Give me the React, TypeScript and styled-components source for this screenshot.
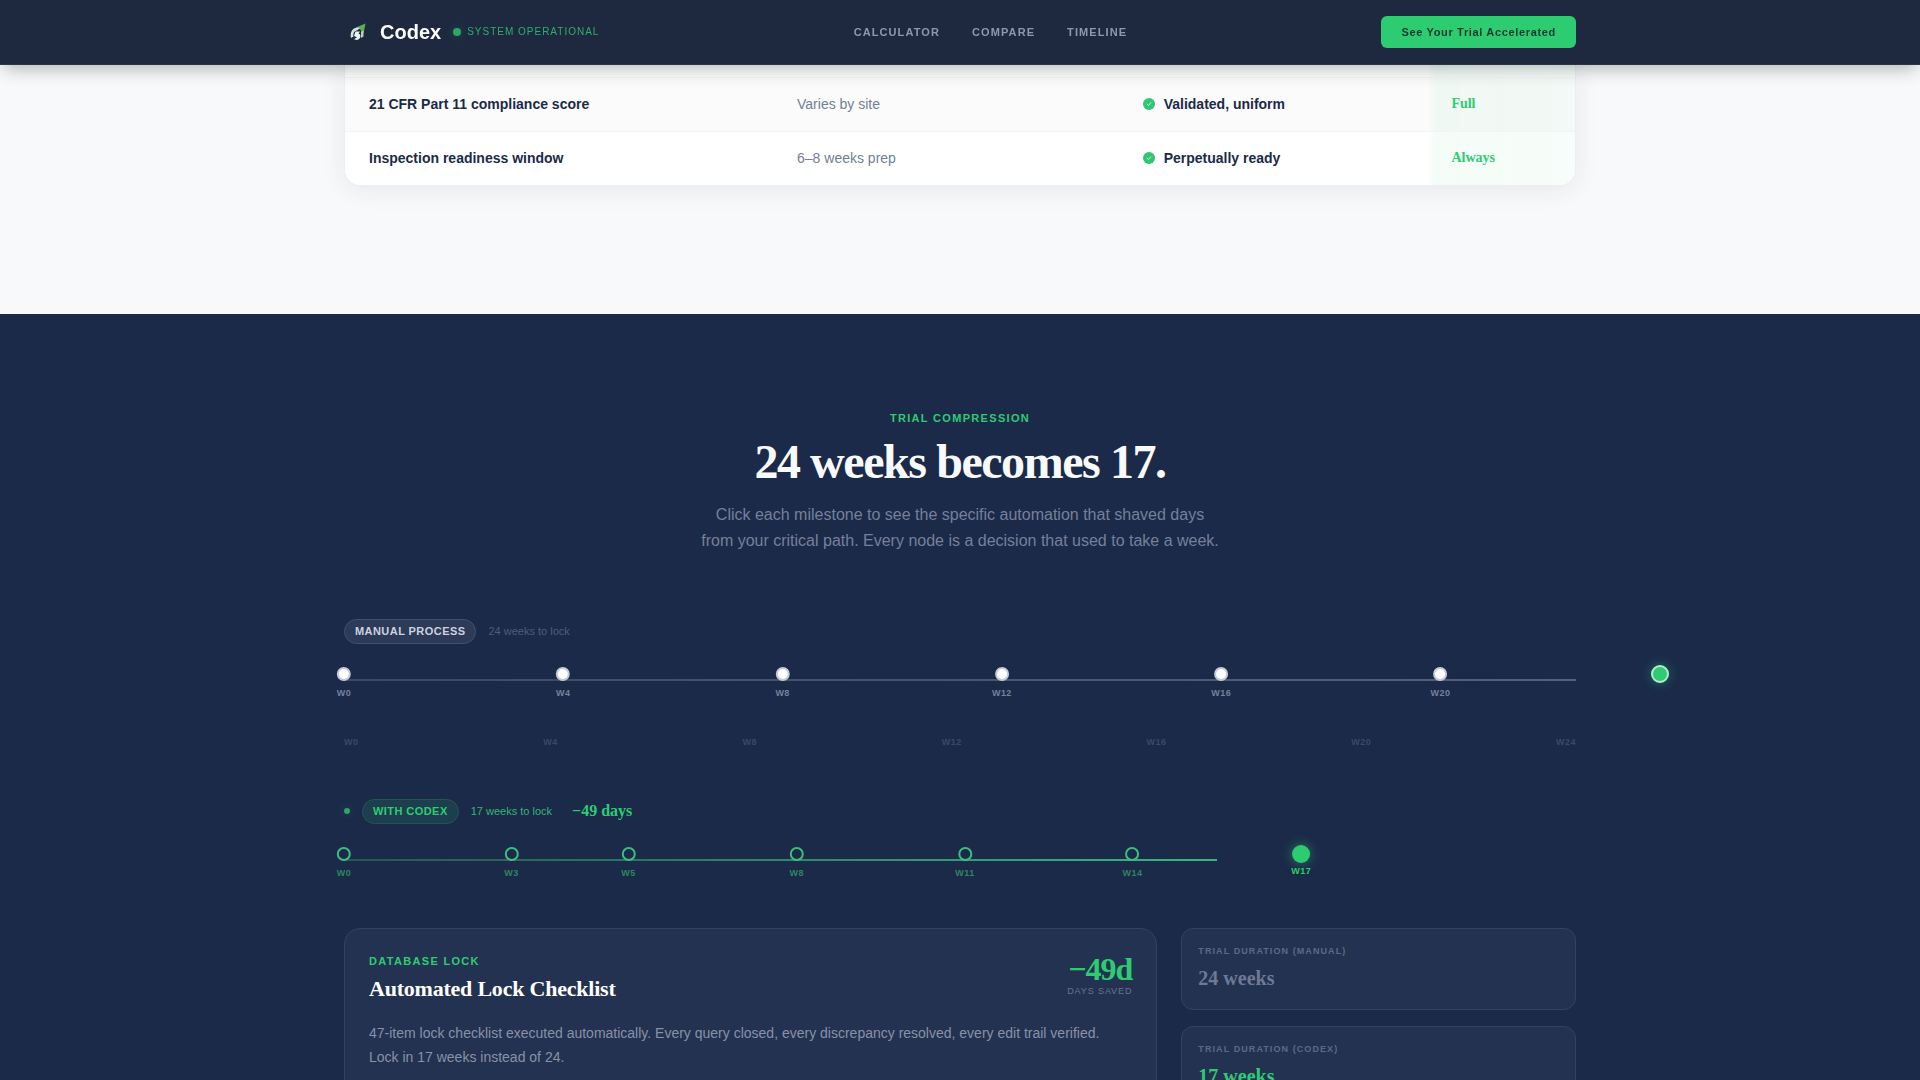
import React from "react";
import styled, { createGlobalStyle, css } from "styled-components";

const sans = `"Liberation Sans", Arial, sans-serif`;
const serif = `"Liberation Serif", "Times New Roman", serif`;
const green = "#2ecc71";
const navy = "#1b2a49";

const GlobalStyle = createGlobalStyle`
  *, *::before, *::after { box-sizing: border-box; }
  body { margin: 0; background: #f8f9fa; font-family: ${sans}; color: ${navy}; }
  h1, h2, h3, p, dl, dd, ol { margin: 0; padding: 0; }
`;

const Page = styled.div`
  height: 100vh;
  overflow: hidden;
`;

const Container = styled.div`
  max-width: 1280px;
  margin: 0 auto;
  padding: 0 24px;
`;

const Header = styled.header`
  position: sticky;
  top: 0;
  z-index: 10;
  background: #1e2940;
  border-bottom: 1px solid #2a364f;
  box-shadow: 0 8px 16px -4px rgba(15, 25, 30, 0.3);
`;

const HeaderRow = styled(Container)`
  display: flex;
  align-items: center;
  justify-content: space-between;
  height: 64px;
`;

const Brand = styled.div`
  display: flex;
  align-items: center;
`;

const BrandLink = styled.a`
  display: flex;
  align-items: center;
  gap: 8px;
  color: #ffffff;
  font-size: 20px;
  font-weight: 700;
  text-decoration: none;
`;

const Status = styled.span`
  display: flex;
  align-items: center;
  gap: 6px;
  margin-left: 12px;
  color: #2eae69;
  font-size: 10px;
  line-height: 16px;
  letter-spacing: 0.1em;
  text-transform: uppercase;
`;

const Dot = styled.span<{ $size: number }>`
  flex: none;
  width: ${(p) => p.$size}px;
  height: ${(p) => p.$size}px;
  border-radius: 50%;
  background: #2ba765;
  box-shadow: 0 0 8px rgba(46, 204, 113, 0.25);
`;

const Nav = styled.nav`
  display: flex;
  gap: 32px;
`;

const NavLink = styled.a`
  color: #8e98aa;
  font-size: 11px;
  font-weight: 700;
  letter-spacing: 0.1em;
  text-decoration: none;
  text-transform: uppercase;
`;

const CtaButton = styled.button`
  height: 32px;
  padding: 0 20px;
  border: 0;
  border-radius: 6px;
  background: ${green};
  color: #14382f;
  font: 700 11px ${sans};
  letter-spacing: 0.06em;
  cursor: pointer;
`;

const CompareSection = styled.section`
  padding-bottom: 128px;
  background: #f8f9fa;
`;

const TableCard = styled.div`
  overflow: hidden;
  border: 1px solid #eceef1;
  border-top: 0;
  border-radius: 0 0 16px 16px;
  background: #ffffff;
  box-shadow: 0 4px 24px rgba(27, 42, 74, 0.08);
`;

const Table = styled.table`
  width: 100%;
  border-collapse: collapse;
  table-layout: fixed;
  font-size: 14px;
  text-align: left;
`;

const Col = styled.col<{ $width: string }>`
  width: ${(p) => p.$width};
`;

const cell = css`
  height: 54px;
  padding: 0 24px;
  vertical-align: middle;
`;

const tint = css`
  background: linear-gradient(90deg, rgba(46, 204, 113, 0), rgba(46, 204, 113, 0.05) 8px, rgba(46, 204, 113, 0.04));
`;

const Row = styled.tr<{ $shaded?: boolean }>`
  background: ${(p) => (p.$shaded ? "#fbfbfb" : "#ffffff")};
  & + & { border-top: 1px solid #f3f4f5; }
`;

const Metric = styled.th`
  ${cell}
  font-weight: 700;
`;

const Manual = styled.td`
  ${cell}
  color: #718096;
`;

const Automated = styled.td`
  ${cell}
  font-weight: 700;
`;

const WithIcon = styled.span`
  display: flex;
  align-items: center;
  gap: 9px;
`;

const Delta = styled.td`
  ${cell}
  ${tint}
  color: ${green};
  font-family: ${serif};
  font-weight: 700;
`;

const PeekRow = styled.tr`
  border-bottom: 1px solid #f3f4f5;
  background: #ffffff;
  & > td { height: 12px; padding: 0; }
`;

const PeekDelta = styled.td`
  ${tint}
`;

const TimelineSection = styled.section`
  padding: 96px 0;
  background: ${navy};
`;

const Intro = styled.div`
  display: flex;
  flex-direction: column;
  align-items: center;
  margin-bottom: 64px;
  text-align: center;
`;

const Eyebrow = styled.p`
  color: ${green};
  font-size: 11px;
  font-weight: 700;
  line-height: 16px;
  letter-spacing: 0.12em;
  text-transform: uppercase;
`;

const Heading = styled.h2`
  margin-top: 12px;
  color: #f8f9fb;
  font-family: ${serif};
  font-size: 48px;
  font-weight: 700;
  line-height: 48px;
  letter-spacing: -0.03em;
`;

const Lead = styled.p`
  max-width: 520px;
  margin-top: 16px;
  color: #75809a;
  font-size: 16px;
  line-height: 26px;
`;

const LaneHead = styled.div`
  display: flex;
  align-items: center;
  gap: 12px;
  height: 26px;
`;

const Pill = styled.h3<{ $accent?: boolean }>`
  margin: 0;
  padding: 0 10px;
  border: 1px solid ${(p) => (p.$accent ? "#20574f" : "#43506c")};
  border-radius: 13px;
  background: ${(p) => (p.$accent ? "#1d3e4f" : "#2d3a58")};
  color: ${(p) => (p.$accent ? green : "#cbd3e0")};
  font-size: 11px;
  font-weight: 700;
  line-height: 23px;
  letter-spacing: 0.04em;
  text-transform: uppercase;
`;

const LaneNote = styled.span<{ $accent?: boolean }>`
  color: ${(p) => (p.$accent ? "#35b574" : "#4f5c78")};
  font-size: 11px;
`;

const Saved = styled.strong`
  margin-left: 8px;
  color: ${green};
  font-family: ${serif};
  font-size: 16px;
`;

const Track = styled.div`
  position: relative;
  height: 2px;
  margin-top: 35px;
`;

const Line = styled.div<{ $accent?: boolean }>`
  width: ${(p) => (p.$accent ? "calc(100% * 17 / 24)" : "100%")};
  height: 2px;
  background: ${(p) =>
    p.$accent
      ? "linear-gradient(90deg, #25574f, #2f7c66 40%, #3bb584)"
      : "linear-gradient(90deg, #3c4964, #56627d)"};
`;

const Node = styled.button<{ $kind: "manual" | "codex" | "goal" | "lock" }>`
  position: absolute;
  top: ${(p) => (p.$kind === "goal" || p.$kind === "lock" ? -14 : -12)}px;
  display: flex;
  flex-direction: column;
  align-items: center;
  gap: ${(p) => (p.$kind === "lock" ? 3 : 7)}px;
  padding: 0;
  border: 0;
  background: none;
  color: ${(p) => (p.$kind === "manual" ? "#76819a" : p.$kind === "codex" ? "#2b8661" : green)};
  font: 700 9px/10px ${sans};
  letter-spacing: 0.05em;
  transform: translateX(-50%);
  cursor: pointer;

  &::before {
    content: "";
    width: 14px;
    height: 14px;
    border-radius: 50%;
    ${(p) => p.$kind === "manual" && css`
      border: 2px solid #c3cbd8;
      background: #ffffff;
    `}
    ${(p) => p.$kind === "codex" && css`
      border: 2px solid #3fbd80;
      background: ${navy};
    `}
    ${(p) => p.$kind === "goal" && css`
      width: 18px;
      height: 18px;
      border: 2px solid #b4ecce;
      background: ${green};
      box-shadow: 0 0 12px rgba(46, 204, 113, 0.45);
    `}
    ${(p) => p.$kind === "lock" && css`
      width: 18px;
      height: 18px;
      background: ${green};
      box-shadow: 0 0 12px rgba(46, 204, 113, 0.55);
    `}
  }
`;

const Axis = styled.div`
  display: flex;
  justify-content: space-between;
  margin: 56px 0 51px;
  color: #3c4965;
  font-size: 9px;
  font-weight: 700;
  line-height: 10px;
  letter-spacing: 0.05em;
`;

const DetailGrid = styled.div`
  display: grid;
  grid-template-columns: repeat(12, minmax(0, 1fr));
  gap: 24px;
  margin-top: 67px;
`;

const panel = css`
  border: 1px solid #34425f;
  background: #243251;
`;

const Detail = styled.article`
  ${panel}
  grid-column: span 8;
  padding: 24px;
  border-radius: 16px;
`;

const DetailHead = styled.header`
  display: flex;
  align-items: flex-start;
  justify-content: space-between;
`;

const DetailTitle = styled.h3`
  margin-top: 8px;
  color: #ffffff;
  font-family: ${serif};
  font-size: 22px;
  font-weight: 700;
  line-height: 24px;
  letter-spacing: -0.01em;
`;

const Figure = styled.div`
  display: flex;
  flex-direction: column;
  align-items: flex-end;
`;

const FigureValue = styled.strong`
  color: ${green};
  font-family: ${serif};
  font-size: 32px;
  line-height: 32px;
  letter-spacing: -0.03em;
`;

const Caption = styled.span`
  color: #67738d;
  font-size: 9px;
  line-height: 12px;
  letter-spacing: 0.1em;
  text-transform: uppercase;
`;

const DetailText = styled.p`
  margin-top: 20px;
  color: #8791a8;
  font-size: 14px;
  line-height: 24px;
`;

const Stats = styled.dl`
  display: flex;
  flex-direction: column;
  grid-column: span 4;
  gap: 16px;
`;

const Stat = styled.div`
  ${panel}
  display: flex;
  flex-direction: column;
  gap: 8px;
  height: 82px;
  padding: 16px;
  border-radius: 12px;
`;

const StatLabel = styled.dt`
  color: #5d6984;
  font-size: 9px;
  font-weight: 700;
  line-height: 12px;
  letter-spacing: 0.12em;
  text-transform: uppercase;
`;

const StatValue = styled.dd<{ $accent?: boolean }>`
  color: ${(p) => (p.$accent ? green : "#6e7a95")};
  font-family: ${serif};
  font-size: 20px;
  font-weight: 700;
  line-height: 26px;
`;

const LogoMark = () => (
  <svg width="28" height="28" viewBox="0 0 28 28" aria-hidden="true">
    <path d="M12 9.5 21.5 5.500 19.5 15.5 16 11.2Z" fill="#5fae55" />
    <path d="M7 20c-1-5 .5-9.500 6-10.500l3 .5-3 2.500c-3 .5-4 3-3.500 6Z" fill="#d5e3da" />
    <path d="M11.500 13.500h4.500l-1.500 2c3 .8 2.500 5.500-1.500 6.500l-3-.8 3-2-3-1.200Z" fill="#edf5f0" />
    <path d="M17 13.500l2.500-1v6l-2.500 1.500Z" fill="#b8cfc2" />
  </svg>
);

const CheckIcon = () => (
  <svg width="12" height="12" viewBox="0 0 12 12" aria-hidden="true">
    <circle cx="6" cy="6" r="6" fill="#32c573" />
    <path d="M4 6.200 5.400 7.500 7.800 4.800" fill="none" stroke="#c4f1d7" strokeWidth="1" strokeLinecap="round" />
  </svg>
);

const rows = [
  { metric: "21 CFR Part 11 compliance score", manual: "Varies by site", codex: "Validated, uniform", delta: "Full" },
  { metric: "Inspection readiness window", manual: "6–8 weeks prep", codex: "Perpetually ready", delta: "Always" },
];

const manualWeeks = [0, 4, 8, 12, 16, 20, 24];

const codexNodes = [
  { week: 0, at: 0 },
  { week: 3, at: 13.6 },
  { week: 5, at: 23.1 },
  { week: 8, at: 36.75 },
  { week: 11, at: 50.4 },
  { week: 14, at: 64 },
  { week: 17, at: 77.7 },
];

export default function App() {
  return (
    <Page>
      <GlobalStyle />
      <Header>
        <HeaderRow>
          <Brand>
            <BrandLink href="#top"><LogoMark />Codex</BrandLink>
            <Status><Dot $size={8} />System operational</Status>
          </Brand>
          <Nav>
            <NavLink href="#calculator">Calculator</NavLink>
            <NavLink href="#compare">Compare</NavLink>
            <NavLink href="#timeline">Timeline</NavLink>
          </Nav>
          <CtaButton type="button">See Your Trial Accelerated</CtaButton>
        </HeaderRow>
      </Header>

      <CompareSection id="compare">
        <Container>
          <TableCard>
            <Table>
              <colgroup>
                <Col $width="34.8%" />
                <Col $width="28.1%" />
                <Col $width="25.1%" />
                <Col $width="12%" />
              </colgroup>
              <tbody>
                <PeekRow aria-hidden="true"><td colSpan={3} /><PeekDelta /></PeekRow>
                {rows.map((r, i) => (
                  <Row key={r.metric} $shaded={i === 0}>
                    <Metric scope="row">{r.metric}</Metric>
                    <Manual>{r.manual}</Manual>
                    <Automated><WithIcon><CheckIcon />{r.codex}</WithIcon></Automated>
                    <Delta>{r.delta}</Delta>
                  </Row>
                ))}
              </tbody>
            </Table>
          </TableCard>
        </Container>
      </CompareSection>

      <TimelineSection id="timeline">
        <Container>
          <Intro>
            <Eyebrow>Trial compression</Eyebrow>
            <Heading>24 weeks becomes 17.</Heading>
            <Lead>
              Click each milestone to see the specific automation that shaved days from your critical path. Every node is
              a decision that used to take a week.
            </Lead>
          </Intro>

          <LaneHead>
            <Pill>Manual process</Pill>
            <LaneNote>24 weeks to lock</LaneNote>
          </LaneHead>
          <Track>
            <Line />
            {manualWeeks.map((w, i) => (
              <Node
                key={w}
                type="button"
                aria-label={`Manual week ${w}`}
                $kind={w === 24 ? "goal" : "manual"}
                style={{ left: `${i * 17.8}%` }}
              >
                {w === 24 ? null : `W${w}`}
              </Node>
            ))}
          </Track>
          <Axis>
            {manualWeeks.map((w) => <span key={w}>W{w}</span>)}
          </Axis>

          <LaneHead>
            <Dot $size={6} />
            <Pill $accent>With Codex</Pill>
            <LaneNote $accent>17 weeks to lock</LaneNote>
            <Saved>−49 days</Saved>
          </LaneHead>
          <Track>
            <Line $accent />
            {codexNodes.map((n) => (
              <Node
                key={n.week}
                type="button"
                aria-label={`Codex week ${n.week}`}
                $kind={n.week === 17 ? "lock" : "codex"}
                style={{ left: `${n.at}%` }}
              >
                W{n.week}
              </Node>
            ))}
          </Track>

          <DetailGrid>
            <Detail>
              <DetailHead>
                <div>
                  <Eyebrow>Database lock</Eyebrow>
                  <DetailTitle>Automated Lock Checklist</DetailTitle>
                </div>
                <Figure>
                  <FigureValue>−49d</FigureValue>
                  <Caption>Days saved</Caption>
                </Figure>
              </DetailHead>
              <DetailText>
                47-item lock checklist executed automatically. Every query closed, every discrepancy resolved, every edit
                trail verified. Lock in 17 weeks instead of 24.
              </DetailText>
            </Detail>
            <Stats>
              <Stat>
                <StatLabel>Trial duration (manual)</StatLabel>
                <StatValue>24 weeks</StatValue>
              </Stat>
              <Stat>
                <StatLabel>Trial duration (Codex)</StatLabel>
                <StatValue $accent>17 weeks</StatValue>
              </Stat>
            </Stats>
          </DetailGrid>
        </Container>
      </TimelineSection>
    </Page>
  );
}
